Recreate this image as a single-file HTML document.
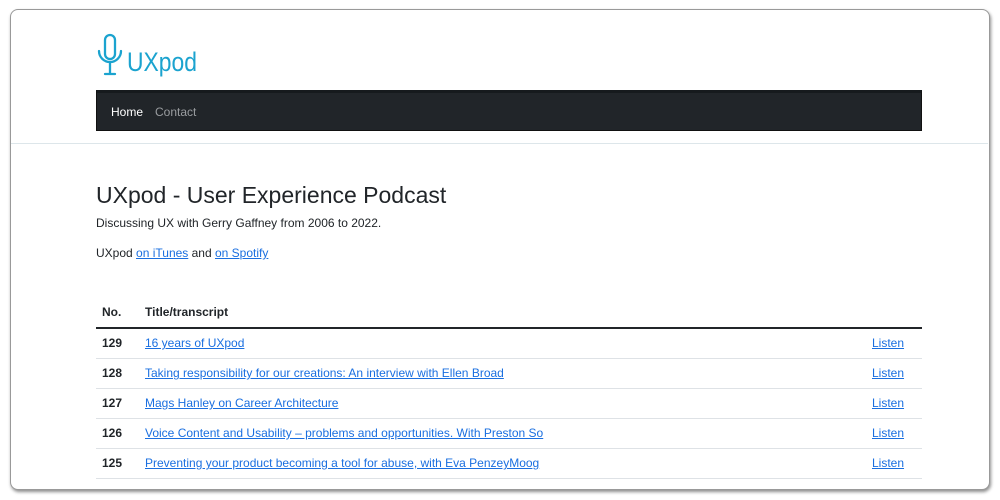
<!DOCTYPE html>
<html><head><style>
body{margin:0;width:1000px;height:500px;background:#fff;font-family:"Liberation Sans",sans-serif;overflow:hidden;position:relative}
.card{position:absolute;left:10px;top:9px;width:978px;height:479px;border:1px solid #999;border-radius:8px;box-shadow:1px 2px 3px rgba(0,0,0,.45);background:#fff;overflow:hidden}
.logo{position:absolute;left:97px;top:33px}
.nav{position:absolute;left:96px;top:90px;width:826px;height:41px;background:#212529;border:1px solid #111;box-sizing:border-box;border-top:3px solid #161a1d}
.nav span{position:absolute;top:12px;font-size:12px}
.hr{position:absolute;left:11px;top:143px;width:977px;height:1px;background:#dde6ea}
h1{position:absolute;left:96px;top:182px;margin:0;font-weight:normal;font-size:23px;color:#212529}
.p{position:absolute;left:96px;font-size:12px;color:#212529}
a{color:#1a6fe0;text-decoration:underline}
table{position:absolute;left:96px;top:297px;width:826px;border-collapse:collapse;font-size:12px;color:#212529}
td,th{height:30px;padding:0 6px;box-sizing:border-box;border-bottom:1px solid #dee2e6;text-align:left}
th{border-bottom:2px solid #212529;height:31px}
td:first-child,th:first-child{width:43px;font-weight:bold}
td:last-child{text-align:left;width:56px;padding-right:14px}
</style></head><body>
<div class="card"></div>
<div class="logo">
<svg width="110" height="45" viewBox="0 0 110 45">
<g fill="none" stroke="#1ba3cf" stroke-width="2.3" stroke-linecap="round">
<rect x="8" y="2" width="10" height="24" rx="5"/>
<path d="M2 18 A11 11 0 0 0 24 18"/>
<path d="M13 30 V41 M8 41 H18"/>
</g>
<text x="30" y="38" font-family="Liberation Sans,sans-serif" font-size="27" fill="#1ba3cf" textLength="70" lengthAdjust="spacingAndGlyphs">UXpod</text>
</svg>
</div>
<div class="nav"><span style="left:14px;color:#fff">Home</span><span style="left:58px;color:#9a9da0">Contact</span></div>
<div class="hr"></div>
<h1>UXpod - User Experience Podcast</h1>
<div class="p" style="top:216px">Discussing UX with Gerry Gaffney from 2006 to 2022.</div>
<div class="p" style="top:246px">UXpod <a>on iTunes</a> and <a>on Spotify</a></div>
<table>
<tr><th>No.</th><th>Title/transcript</th><th></th></tr>
<tr><td>129</td><td><a>16 years of UXpod</a></td><td><a>Listen</a></td></tr>
<tr><td>128</td><td><a>Taking responsibility for our creations: An interview with Ellen Broad</a></td><td><a>Listen</a></td></tr>
<tr><td>127</td><td><a>Mags Hanley on Career Architecture</a></td><td><a>Listen</a></td></tr>
<tr><td>126</td><td><a>Voice Content and Usability – problems and opportunities. With Preston So</a></td><td><a>Listen</a></td></tr>
<tr><td>125</td><td><a>Preventing your product becoming a tool for abuse, with Eva PenzeyMoog</a></td><td><a>Listen</a></td></tr>
</table>
</body></html>
